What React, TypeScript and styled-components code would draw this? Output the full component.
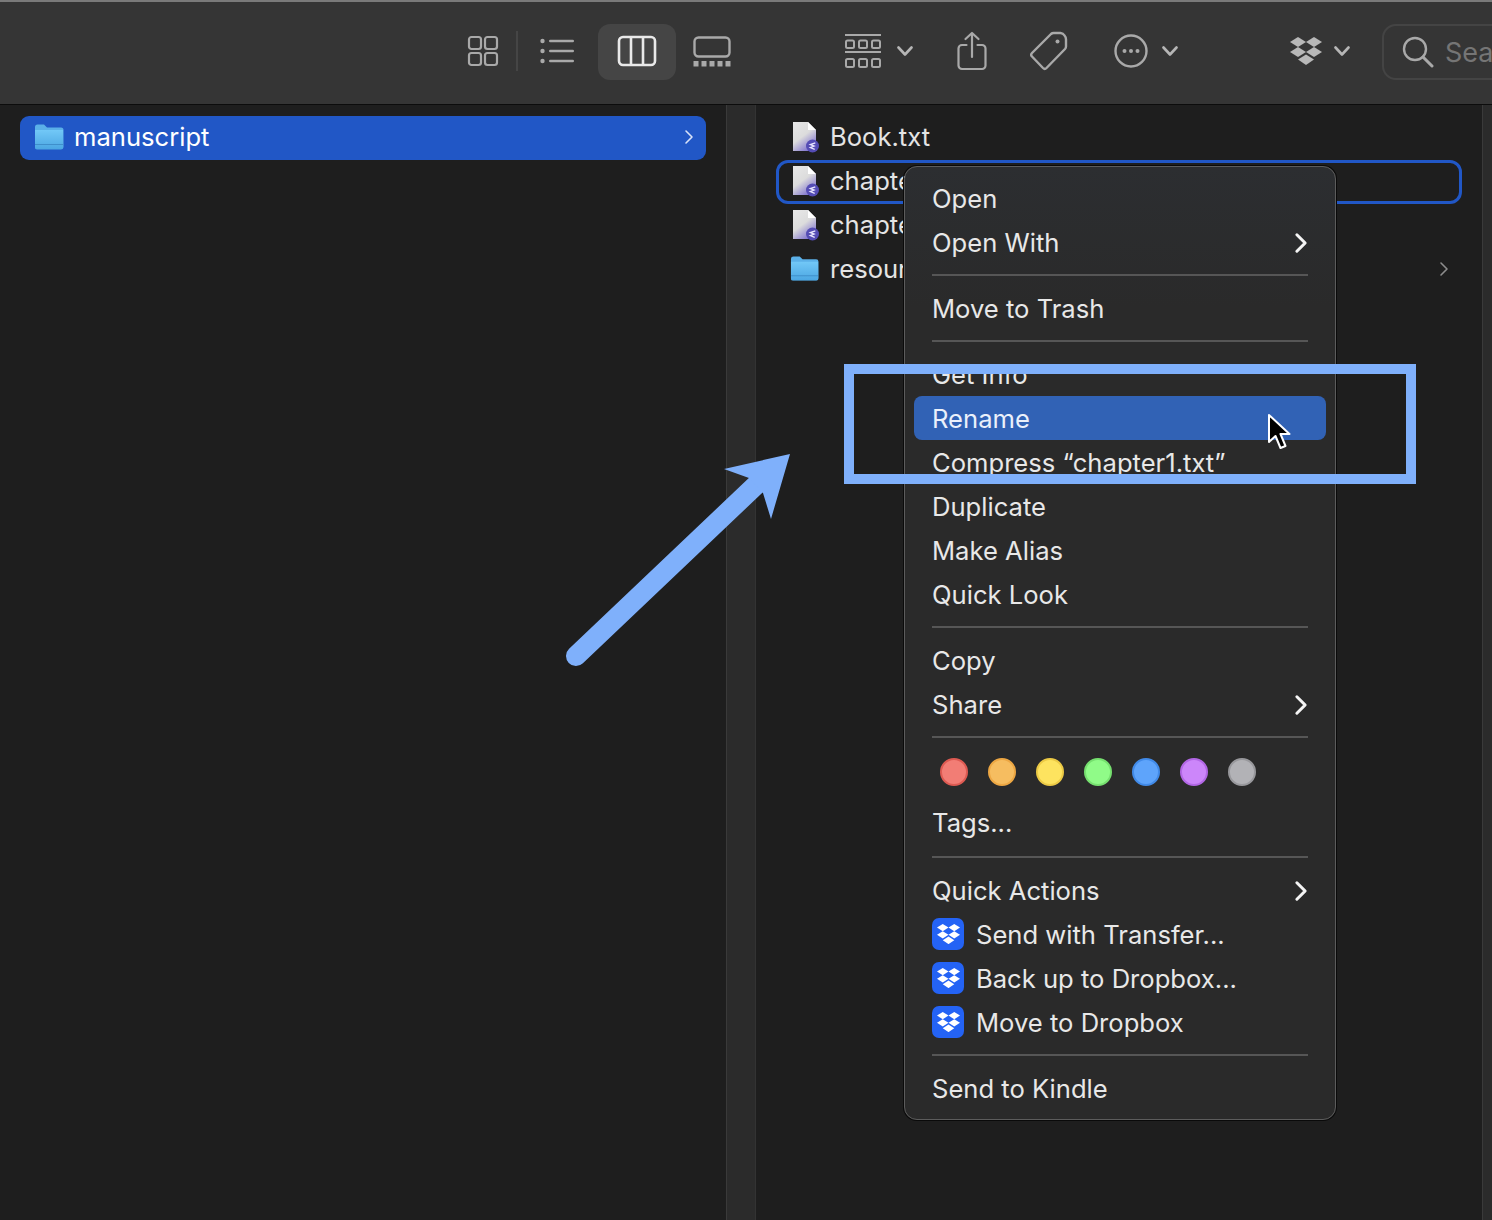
import React from "react";
import styled, { createGlobalStyle } from "styled-components";

const GlobalStyle = createGlobalStyle`
  html, body {
    margin: 0;
    padding: 0;
    background: #1e1e1e;
    font-family: Inter, "Liberation Sans", sans-serif;
  }
`;

const FolderIcon: React.FC<{ size?: number }> = ({ size = 30 }) => (
    <svg width={size} height={size * 0.9} viewBox="0 0 30 27">
        <defs>
            <linearGradient id="folderFill" x1="0" y1="0" x2="0" y2="1">
                <stop offset="0" stopColor="#72c8f7" />
                <stop offset="1" stopColor="#4ba6e2" />
            </linearGradient>
        </defs>
        <path d="M1 4a2.500 2.500 0 0 1 2.500-2.500h6.500l3 3h14a2.500 2.500 0 0 1 2.500 2.500v17a2 2 0 0 1-2 2H3a2 2 0 0 1-2-2z" fill="#5bb0e8" />
        <path d="M1 7h28v17.500a2 2 0 0 1-2 2H3a2 2 0 0 1-2-2z" fill="url(#folderFill)" />
        <path d="M1 21.500h28" stroke="#3f8fcb" strokeWidth="1" />
    </svg>
);

const FileIcon: React.FC = () => (
    <svg width="30" height="32" viewBox="0 0 30 32">
        <defs>
            <linearGradient id="pageFill" x1="0" y1="0" x2="0.6" y2="1">
                <stop offset="0" stopColor="#e8e8e8" />
                <stop offset="0.55" stopColor="#dcdcdc" />
                <stop offset="1" stopColor="#8478cf" />
            </linearGradient>
        </defs>
        <path d="M3 1h15l8 8v21H3z" fill="url(#pageFill)" />
        <path d="M18 1l8 8h-8z" fill="#ffffff" />
        <circle cx="22.500" cy="25" r="6.500" fill="#544cb4" />
        <path d="M25.300 21.800l-5 1.800 3.800 1.500-3.800 1.500 4.400 1.800" stroke="#e9e6ff" strokeWidth="1.300" fill="none" />
    </svg>
);

const Chevron: React.FC<{ color?: string; weight?: number; w?: number; h?: number }> = ({
    color = "#b9b9b9",
    weight = 2,
    w = 10,
    h = 16,
}) => (
    <svg width={w} height={h} viewBox="0 0 10 16">
        <path d="M2 2l6 6-6 6" stroke={color} strokeWidth={weight} strokeLinecap="round" strokeLinejoin="round" fill="none" />
    </svg>
);

const DownChevron: React.FC = () => (
    <svg width="16" height="11" viewBox="0 0 16 11">
        <path d="M1.500 1.500l6.500 7 6.500-7" stroke="#b6b6b6" strokeWidth="2.600" strokeLinecap="round" strokeLinejoin="round" fill="none" />
    </svg>
);

const DropboxGlyph: React.FC<{ width: number; color: string }> = ({ width, color }) => (
    <svg width={width} height={width * 0.875} viewBox="0 0 32 28">
        <g fill={color}>
            <path d="M8 0l8 5-8 5-8-5z" />
            <path d="M24 0l8 5-8 5-8-5z" />
            <path d="M8 10l8 5-8 5-8-5z" />
            <path d="M24 10l8 5-8 5-8-5z" />
            <path d="M16 17.500l8 5-8 5.500-8-5.500z" />
        </g>
    </svg>
);

const GridIcon = () => (
    <svg width="32" height="32" viewBox="0 0 32 32" fill="none" stroke="#a9a9a9" strokeWidth="2.200">
        <rect x="2" y="2" width="12" height="12" rx="2.500" />
        <rect x="18" y="2" width="12" height="12" rx="2.500" />
        <rect x="2" y="18" width="12" height="12" rx="2.500" />
        <rect x="18" y="18" width="12" height="12" rx="2.500" />
    </svg>
);

const ListIcon = () => (
    <svg width="36" height="26" viewBox="0 0 36 26" fill="#a9a9a9">
        <circle cx="3.500" cy="3" r="2.200" />
        <circle cx="3.500" cy="13" r="2.200" />
        <circle cx="3.500" cy="23" r="2.200" />
        <rect x="10" y="1.700" width="25" height="2.600" rx="1.300" />
        <rect x="10" y="11.700" width="25" height="2.600" rx="1.300" />
        <rect x="10" y="21.700" width="25" height="2.600" rx="1.300" />
    </svg>
);

const ColumnsIcon = () => (
    <svg width="40" height="32" viewBox="0 0 40 32" fill="none" stroke="#e9e9e9" strokeWidth="2.600">
        <rect x="2" y="2" width="36" height="28" rx="4" />
        <path d="M14 2v28M26 2v28" />
    </svg>
);

const GalleryIcon = () => (
    <svg width="38" height="31" viewBox="0 0 38 31">
        <rect x="1.500" y="1.500" width="35" height="19" rx="4" fill="none" stroke="#a9a9a9" strokeWidth="2.400" />
        <g fill="#a9a9a9">
            <rect x="0.500" y="25" width="5" height="5.500" />
            <rect x="8.500" y="25" width="5" height="5.500" />
            <rect x="16.500" y="25" width="5" height="5.500" />
            <rect x="24.500" y="25" width="5" height="5.500" />
            <rect x="32.500" y="25" width="5" height="5.500" />
        </g>
    </svg>
);

const GroupIcon = () => (
    <svg width="38" height="36" viewBox="0 0 38 36" fill="none" stroke="#a9a9a9" strokeWidth="2">
        <path d="M1 2h36M1 19h36" strokeWidth="2.200" />
        <rect x="2" y="7.500" width="8" height="7.500" rx="1.500" />
        <rect x="15" y="7.500" width="8" height="7.500" rx="1.500" />
        <rect x="28" y="7.500" width="8" height="7.500" rx="1.500" />
        <rect x="2" y="26" width="8" height="8" rx="1.500" />
        <rect x="15" y="26" width="8" height="8" rx="1.500" />
        <rect x="28" y="26" width="8" height="8" rx="1.500" />
    </svg>
);

const ShareIcon = () => (
    <svg width="30" height="40" viewBox="0 0 30 40" fill="none" stroke="#a9a9a9" strokeWidth="2.200" strokeLinecap="round" strokeLinejoin="round">
        <path d="M9.500 14H5a3.500 3.500 0 0 0-3.500 3.500v17A3.500 3.500 0 0 0 5 38h20a3.500 3.500 0 0 0 3.500-3.500v-17A3.500 3.500 0 0 0 25 14h-4.500" />
        <path d="M15 26V2M8.500 8L15 2l6.500 6" />
    </svg>
);

const TagIcon = () => (
    <svg width="38" height="40" viewBox="0 0 38 40" fill="none" stroke="#a9a9a9" strokeWidth="2.400" strokeLinejoin="round">
        <path d="M24 2h6.500a5 5 0 0 1 4 2.500 6 6 0 0 1 1.500 4.500v6.500a4 4 0 0 1-1 2.500L16.500 37a2.500 2.500 0 0 1-3.500 0L2 25.500a2.500 2.500 0 0 1 0-3.500L21 3a4 4 0 0 1 3-1z" />
        <circle cx="27.500" cy="10.500" r="2" fill="#a9a9a9" stroke="none" />
    </svg>
);

const MoreIcon = () => (
    <svg width="34" height="34" viewBox="0 0 34 34">
        <circle cx="17" cy="17" r="15.500" fill="none" stroke="#a9a9a9" strokeWidth="2.400" />
        <g fill="#a9a9a9">
            <circle cx="10.500" cy="17" r="2" />
            <circle cx="17" cy="17" r="2" />
            <circle cx="23.500" cy="17" r="2" />
        </g>
    </svg>
);

const SearchIcon = () => (
    <svg width="32" height="32" viewBox="0 0 32 32" fill="none" stroke="#a9a9a9" strokeWidth="2.400" strokeLinecap="round">
        <circle cx="13" cy="13" r="11" />
        <path d="M21 21l9 9" strokeWidth="3" />
    </svg>
);

const CursorIcon = () => (
    <svg width="26" height="38" viewBox="0 0 26 38">
        <path d="M2 2v27l6.500-6 5 12 5-2-5-12h9z" fill="#000" stroke="#fff" strokeWidth="2" strokeLinejoin="round" />
    </svg>
);

const tagColors = [
    { fill: "#f27d75", ring: "#dd5a52" },
    { fill: "#f6bd60", ring: "#eda743" },
    { fill: "#fde35f", ring: "#ecca45" },
    { fill: "#90fb88", ring: "#76e06f" },
    { fill: "#5ea4fb", ring: "#418ae8" },
    { fill: "#cc86fa", ring: "#b267e5" },
    { fill: "#b2b2b6", ring: "#98989c" },
];

const files = [
    { name: "Book.txt", icon: "file" },
    { name: "chapter1.txt", icon: "file", focused: true },
    { name: "chapter2.txt", icon: "file" },
    { name: "resources", icon: "folder", more: true },
];

const MenuChevron = () => <Chevron color="#f4f4f4" weight={2.200} w={14} h={22} />;

const App: React.FC = () => {
    return (
        <Page>
            <GlobalStyle />
            <Toolbar>
                <ToolSlot $w={54}><GridIcon /></ToolSlot>
                <ToolDivider />
                <ToolSlot $w={66}><ListIcon /></ToolSlot>
                <ActivePill><ColumnsIcon /></ActivePill>
                <ToolSlot $w={72}><GalleryIcon /></ToolSlot>
                <ToolSlot $w={38} $ml={96}><GroupIcon /></ToolSlot>
                <ToolSlot $w={16} $ml={15}><DownChevron /></ToolSlot>
                <ToolSlot $w={30} $ml={44}><ShareIcon /></ToolSlot>
                <ToolSlot $w={38} $ml={43}><TagIcon /></ToolSlot>
                <ToolSlot $w={34} $ml={46}><MoreIcon /></ToolSlot>
                <ToolSlot $w={16} $ml={14}><DownChevron /></ToolSlot>
                <ToolSlot $w={32} $ml={112}><DropboxGlyph width={32} color="#b8b8b8" /></ToolSlot>
                <ToolSlot $w={16} $ml={12}><DownChevron /></ToolSlot>
                <SearchBox>
                    <SearchIcon />
                    <SearchText>Search</SearchText>
                </SearchBox>
            </Toolbar>

            <Browser>
                <Column>
                    <SidebarRow>
                        <FolderIcon size={30} />
                        <RowLabel $selected>manuscript</RowLabel>
                        <RowEnd><Chevron color="#d8e2f8" weight={1.600} /></RowEnd>
                    </SidebarRow>
                </Column>
                <Track />
                <Column>
                    {files.map((file) => (
                        <FileRow key={file.name} $focused={file.focused}>
                            <IconCell>{file.icon === "file" ? <FileIcon /> : <FolderIcon size={29} />}</IconCell>
                            <RowLabel>{file.name}</RowLabel>
                            {file.more && <RowEnd><Chevron color="#8d8d8d" weight={1.600} /></RowEnd>}
                        </FileRow>
                    ))}
                </Column>
                <Track $narrow />
            </Browser>

            <Menu>
                <MenuItem>Open</MenuItem>
                <MenuItem>Open With<SubArrow><MenuChevron /></SubArrow></MenuItem>
                <Separator />
                <MenuItem>Move to Trash</MenuItem>
                <Separator />
                <MenuItem>Get Info</MenuItem>
                <MenuItem $active>
                    Rename
                    <PointerSpot><CursorIcon /></PointerSpot>
                </MenuItem>
                <MenuItem>Compress “chapter1.txt”</MenuItem>
                <MenuItem>Duplicate</MenuItem>
                <MenuItem>Make Alias</MenuItem>
                <MenuItem>Quick Look</MenuItem>
                <Separator />
                <MenuItem>Copy</MenuItem>
                <MenuItem>Share<SubArrow><MenuChevron /></SubArrow></MenuItem>
                <Separator />
                <TagRow>
                    {tagColors.map((tag) => <TagDot key={tag.fill} $fill={tag.fill} $ring={tag.ring} />)}
                </TagRow>
                <MenuItem>Tags...</MenuItem>
                <Separator $tall />
                <MenuItem>Quick Actions<SubArrow><MenuChevron /></SubArrow></MenuItem>
                <MenuItem><DropboxBadge><DropboxGlyph width={23} color="#fff" /></DropboxBadge>Send with Transfer...</MenuItem>
                <MenuItem><DropboxBadge><DropboxGlyph width={23} color="#fff" /></DropboxBadge>Back up to Dropbox...</MenuItem>
                <MenuItem><DropboxBadge><DropboxGlyph width={23} color="#fff" /></DropboxBadge>Move to Dropbox</MenuItem>
                <Separator />
                <MenuItem>Send to Kindle</MenuItem>
            </Menu>

            <HighlightBox />
            <ArrowOverlay viewBox="0 0 1492 1220">
                <path d="M576 656L756 485" stroke="#7fb0fb" strokeWidth="20" strokeLinecap="round" />
                <path d="M790 454L724 469L749 478L763 493L771 519z" fill="#7fb0fb" />
            </ArrowOverlay>
        </Page>
    );
};

export default App;

const Page = styled.div`
    position: relative;
    width: 1492px;
    height: 1220px;
    overflow: hidden;
    background: #1e1e1e;
    color: #e4e4e4;
`;

const Toolbar = styled.header`
    display: flex;
    align-items: center;
    box-sizing: border-box;
    height: 105px;
    padding-left: 456px;
    padding-bottom: 4px;
    background: #353535;
    border-top: 2px solid #7a7a7a;
    border-bottom: 1px solid #0c0c0c;
`;

const ToolSlot = styled.div<{ $w: number; $ml?: number }>`
    display: flex;
    flex: none;
    align-items: center;
    justify-content: center;
    width: ${(p) => p.$w}px;
    margin-left: ${(p) => p.$ml ?? 0}px;
`;

const ToolDivider = styled.div`
    flex: none;
    width: 2px;
    height: 40px;
    margin: 0 6px;
    background: #454545;
`;

const ActivePill = styled.div`
    display: flex;
    flex: none;
    align-items: center;
    justify-content: center;
    box-sizing: border-box;
    width: 78px;
    height: 56px;
    margin-top: 2px;
    margin-left: 8px;
    padding-bottom: 2px;
    border-radius: 12px;
    background: #454545;
`;

const SearchBox = styled.div`
    display: flex;
    flex: none;
    align-items: center;
    gap: 11px;
    box-sizing: border-box;
    width: 200px;
    height: 56px;
    margin-top: 2px;
    margin-left: 32px;
    padding-left: 18px;
    border: 2px solid #444444;
    border-radius: 14px;
`;

const SearchText = styled.span`
    font-size: 27px;
    color: #757575;
`;

const Browser = styled.main`
    display: flex;
    height: 1115px;
`;

const Column = styled.section`
    flex: none;
    box-sizing: border-box;
    width: 726px;
    padding: 11px 20px 0;
`;

const Track = styled.div<{ $narrow?: boolean }>`
    flex: none;
    box-sizing: border-box;
    width: ${(p) => (p.$narrow ? 10 : 30)}px;
    background: #2b2b2b;
    border-left: 1px solid #3a3a3a;
    border-right: ${(p) => (p.$narrow ? "none" : "1px solid #333333")};
`;

const SidebarRow = styled.div`
    display: flex;
    align-items: center;
    gap: 10px;
    box-sizing: border-box;
    height: 44px;
    padding: 0 12px 3px 14px;
    border-radius: 9px;
    background: #2157c6;
`;

const FileRow = styled.div<{ $focused?: boolean }>`
    display: flex;
    align-items: center;
    box-sizing: border-box;
    height: 44px;
    padding: 0 10px 3px 11px;
    border-radius: 12px;
    border: 3px solid ${(p) => (p.$focused ? "#2157c6" : "transparent")};
`;

const IconCell = styled.div`
    display: flex;
    flex: none;
    justify-content: flex-start;
    width: 30px;
    margin-right: 10px;
`;

const RowLabel = styled.span<{ $selected?: boolean }>`
    font-size: 25.6px;
    color: ${(p) => (p.$selected ? "#ffffff" : "#e4e4e4")};
`;

const RowEnd = styled.span`
    display: flex;
    margin-left: auto;
`;

const Menu = styled.nav`
    position: absolute;
    left: 904px;
    top: 166px;
    box-sizing: border-box;
    width: 432px;
    height: 954px;
    padding: 9px 9px;
    border-radius: 13px;
    background: linear-gradient(180deg, #2c2e31 0, #2a2a2a 140px);
    border: 1px solid #5c5c5c;
    box-shadow: 0 0 0 1px #0a0a0a;
`;

const MenuItem = styled.div<{ $active?: boolean }>`
    position: relative;
    display: flex;
    align-items: center;
    height: 44px;
    padding: 0 18px;
    border-radius: 8px;
    font-size: 25.6px;
    color: ${(p) => (p.$active ? "#eaf0fb" : "#e8e8e8")};
    background: ${(p) => (p.$active ? "#3162b5" : "transparent")};
`;

const SubArrow = styled.span`
    display: flex;
    margin-left: auto;
    margin-top: 2px;
`;

const Separator = styled.div<{ $tall?: boolean }>`
    height: 2px;
    margin: ${(p) => (p.$tall ? "12px 18px 10px" : "10px 18px")};
    background: #565656;
`;

const TagRow = styled.div`
    display: flex;
    gap: 20px;
    height: 52px;
    padding: 10px 26px 0;
    box-sizing: border-box;
`;

const TagDot = styled.span<{ $fill: string; $ring: string }>`
    box-sizing: border-box;
    width: 28px;
    height: 28px;
    border-radius: 50%;
    background: ${(p) => p.$fill};
    border: 2px solid ${(p) => p.$ring};
`;

const DropboxBadge = styled.span`
    display: flex;
    flex: none;
    align-items: center;
    justify-content: center;
    width: 32px;
    height: 32px;
    margin-right: 12px;
    border-radius: 7px;
    background: #2463f5;
`;

const PointerSpot = styled.span`
    position: absolute;
    left: 353px;
    top: 17px;
    display: flex;
`;

const HighlightBox = styled.div`
    position: absolute;
    left: 844px;
    top: 364px;
    box-sizing: border-box;
    width: 572px;
    height: 120px;
    border: 10px solid #7fb0fb;
`;

const ArrowOverlay = styled.svg`
    position: absolute;
    left: 0;
    top: 0;
    width: 1492px;
    height: 1220px;
    pointer-events: none;
`;
